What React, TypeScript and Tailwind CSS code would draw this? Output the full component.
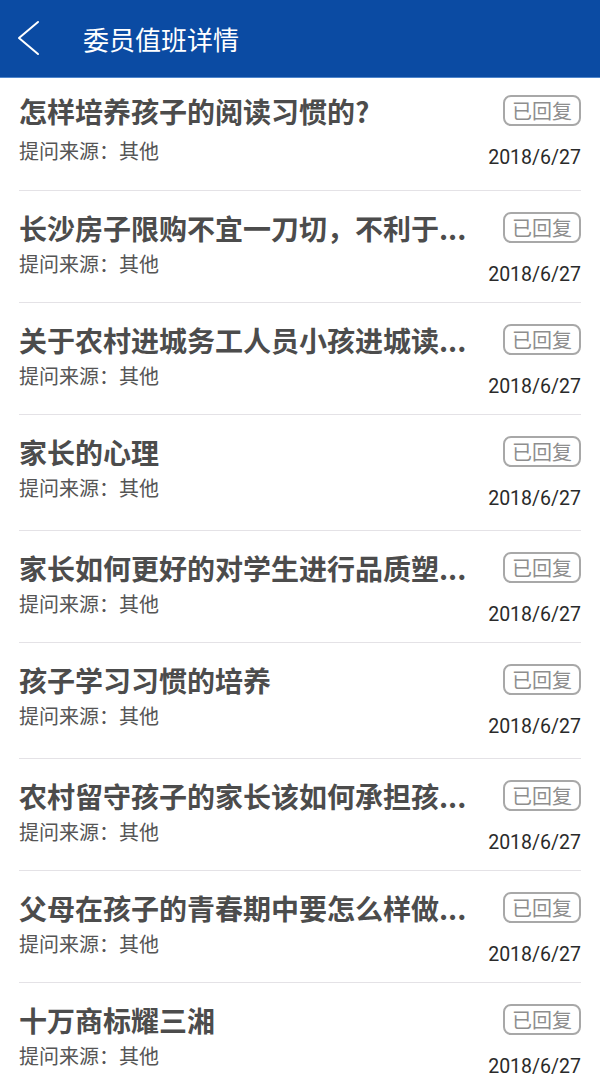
import React from "react";

interface IQuestion {
  title: string;
  source: string;
  date: string;
  height: number;
}

const questions: IQuestion[] = [
  { title: "怎样培养孩子的阅读习惯的?", source: "其他", date: "2018/6/27", height: 113 },
  { title: "长沙房子限购不宜一刀切，不利于...", source: "其他", date: "2018/6/27", height: 112 },
  { title: "关于农村进城务工人员小孩进城读...", source: "其他", date: "2018/6/27", height: 112 },
  { title: "家长的心理", source: "其他", date: "2018/6/27", height: 116 },
  { title: "家长如何更好的对学生进行品质塑...", source: "其他", date: "2018/6/27", height: 112 },
  { title: "孩子学习习惯的培养", source: "其他", date: "2018/6/27", height: 116 },
  { title: "农村留守孩子的家长该如何承担孩...", source: "其他", date: "2018/6/27", height: 112 },
  { title: "父母在孩子的青春期中要怎么样做...", source: "其他", date: "2018/6/27", height: 112 },
  { title: "十万商标耀三湘", source: "其他", date: "2018/6/27", height: 112 },
];

const QuestionRow: React.FC<{ q: IQuestion; first: boolean; last: boolean }> = ({ q, first, last }) => {
  return (
    <div
      className={`mx-[19px] flex justify-between ${first ? "pt-[17px]" : "pt-[21px]"} ${
        last ? "" : "border-b border-[#e4e2e6]"
      }`}
      style={{ height: q.height }}
    >
      {/* left */}
      <div className="flex flex-col">
        <div className="text-[28px] leading-[32px] font-bold text-[#4c4c4c] whitespace-nowrap">{q.title}</div>
        <div className={`${first ? "mt-[12px]" : "mt-[8px]"} text-[20px] leading-[24px] text-[#555555]`}>
          提问来源：{q.source}
        </div>
      </div>

      {/* right */}
      <div className="flex flex-col items-end">
        <div className="w-[78px] h-[31px] rounded-[8px] border-2 border-[#a8a8a8] flex items-center justify-center text-[20px] leading-none text-[#8e8e8e]">
          已回复
        </div>
        <div className="mt-[20px] text-[19.5px] leading-[24px] text-[#2a2a2a] font-['Roboto',sans-serif]">{q.date}</div>
      </div>
    </div>
  );
};

const App: React.FC = () => {
  return (
    <div className="w-[600px] h-[1084px] overflow-hidden bg-white font-['Noto_Sans_CJK_SC','Noto_Sans',sans-serif]">
      {/* HEADER */}
      <div className="h-[78px] bg-[#0b4ba3] border-b border-[#4f86cc] flex items-center">
        <svg width="40" height="40" viewBox="0 0 40 40" className="ml-[10px]" fill="none">
          <path d="M28 3 L9 19 L28 35" stroke="white" strokeWidth="2" strokeLinecap="round" strokeLinejoin="round" />
        </svg>
        <span className="ml-[33px] text-[26px] leading-none text-white">委员值班详情</span>
      </div>

      {/* LIST */}
      {questions.map((q, i) => (
        <QuestionRow key={i} q={q} first={i === 0} last={i === questions.length - 1} />
      ))}
    </div>
  );
};

export default App;
